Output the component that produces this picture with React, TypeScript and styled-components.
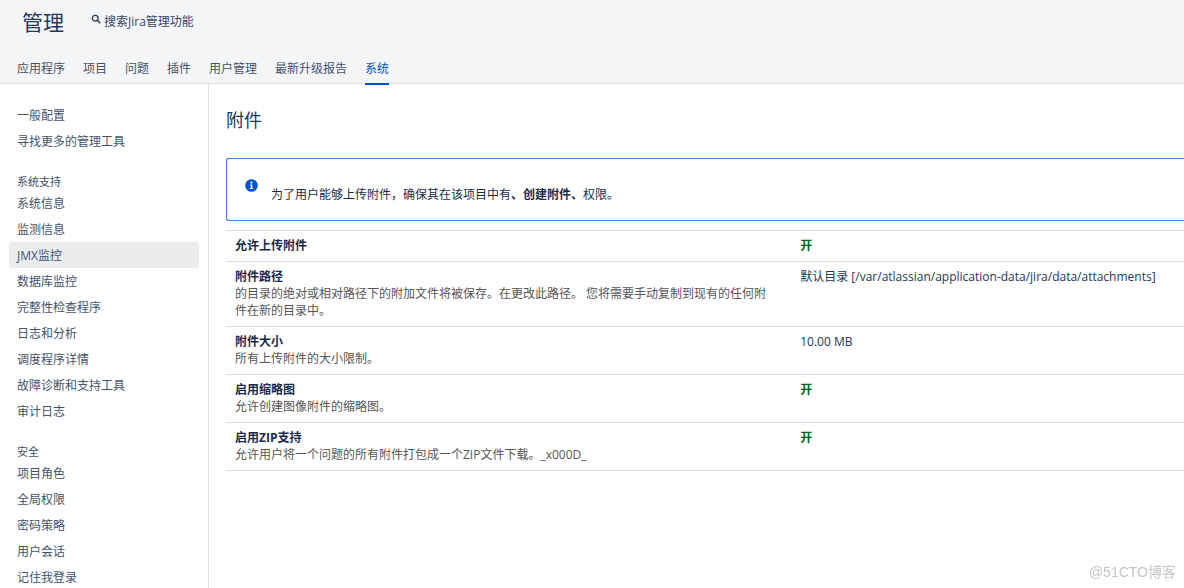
import React from "react";
import styled, { createGlobalStyle } from "styled-components";

const GlobalStyle = createGlobalStyle`
  *, *::before, *::after { box-sizing: border-box; }
  body {
    margin: 0;
    background: #fff;
    color: #253858;
    font-family: "Open Sans", "Noto Sans CJK SC", sans-serif;
    font-size: 12px;
    line-height: 17px;
  }
  a { color: inherit; text-decoration: none; }
  ul { list-style: none; margin: 0; padding: 0; }
`;

const Page = styled.div`
  display: flex;
  flex-direction: column;
  height: 100vh;
  overflow: hidden;
`;

const Header = styled.header`
  flex: none;
  background: #f4f5f7;
  border-bottom: 1px solid #dfe1e6;
`;

const TitleBar = styled.div`
  display: flex;
  align-items: center;
  gap: 27px;
  height: 53px;
  padding: 0 22px 9px;
`;

const PageTitle = styled.h1`
  margin: 0;
  font-size: 21px;
  line-height: 28px;
  font-weight: 400;
  color: #253858;
`;

const SearchButton = styled.button`
  display: flex;
  align-items: center;
  gap: 3px;
  padding: 0 0 2px;
  border: 0;
  background: none;
  color: #344563;
  font: inherit;
  cursor: pointer;

  svg {
    margin-bottom: 4px;
  }
`;

const Tabs = styled.ul`
  && {
    display: flex;
    gap: 18px;
    padding: 0 17px;
  }
`;

const Tab = styled.a<{ $active?: boolean }>`
  display: block;
  height: 32px;
  line-height: 32px;
  margin-bottom: -2px;
  color: ${(p) => (p.$active ? "#0052cc" : "#42526e")};
  border-bottom: 2px solid ${(p) => (p.$active ? "#0052cc" : "transparent")};
  position: relative;
`;

const Body = styled.div`
  display: flex;
  flex: 1;
  min-height: 0;
`;

const Sidebar = styled.nav`
  flex: 0 0 209px;
  display: flex;
  flex-direction: column;
  gap: 19px;
  padding: 18px 9px 0;
  border-right: 1px solid #dfe1e6;
  overflow: hidden;
`;

const GroupHeading = styled.h2`
  margin: 0;
  padding: 0 8px;
  font-size: 11px;
  line-height: 17px;
  font-weight: 400;
  color: #42526e;
`;

const SideLink = styled.a<{ $active?: boolean }>`
  display: block;
  padding: 2px 8px 0;
  line-height: 24px;
  border-radius: 3px;
  color: #42526e;
  background: ${(p) => (p.$active ? "#ebecee" : "transparent")};
`;

const Content = styled.main`
  flex: 1;
  min-width: 0;
  padding: 24px 0 0 17px;
`;

const SectionTitle = styled.h2`
  margin: 0 0 26px;
  font-size: 18px;
  line-height: 24px;
  font-weight: 400;
  color: #253858;
`;

const Message = styled.div`
  display: flex;
  align-items: flex-start;
  gap: 13px;
  padding: 20px 18px 17px;
  margin-bottom: 9px;
  border: 1px solid #3f7fdc;
  border-right: 0;
  border-radius: 3px 0 0 3px;
`;

const MessageText = styled.p`
  margin: 0;
  padding-top: 7px;
  color: #172b4d;
`;

const SettingsTable = styled.table`
  width: 100%;
  table-layout: fixed;
  border-collapse: separate;
  border-spacing: 0;
  border-top: 1px solid #dfe1e6;
`;

const LabelColumn = styled.col`
  width: 59%;
`;

const LabelCell = styled.th`
  padding: 6px 24px 7px 9px;
  border-bottom: 1px solid #dfe1e6;
  text-align: left;
  vertical-align: top;
  font-weight: 700;
  color: #172b4d;
`;

const Description = styled.div`
  font-weight: 400;
  color: #555;
`;

const ValueCell = styled.td`
  padding: 6px 9px 7px;
  border-bottom: 1px solid #dfe1e6;
  vertical-align: top;
  color: #253858;
`;

const Enabled = styled.strong`
  color: #006600;
`;

const Watermark = styled.div`
  position: fixed;
  right: 8px;
  bottom: 6px;
  font-family: "Liberation Sans", "Noto Sans CJK SC", sans-serif;
  font-size: 14px;
  line-height: 20px;
  color: #c4c4c4;
`;

const SearchIcon = () => (
  <svg width="10" height="10" viewBox="0 0 10 10" fill="none" stroke="#253858" strokeWidth="1.3" aria-hidden="true">
    <circle cx="4.2" cy="4.2" r="2.9" />
    <path d="M6.3 6.3 8.8 8.8" strokeLinecap="round" />
  </svg>
);

const InfoIcon = () => (
  <svg width="13" height="13" viewBox="0 0 13 13" aria-hidden="true">
    <circle cx="6.5" cy="6.5" r="6.3" fill="#0052cc" />
    <circle cx="6.5" cy="3.6" r="1.1" fill="#fff" />
    <path d="M5 5.4h2.3v3.5h.9v1.2H4.9V8.9h.9V6.6H5z" fill="#fff" />
  </svg>
);

const tabs = ["应用程序", "项目", "问题", "插件", "用户管理", "最新升级报告", "系统"];

const groups: { heading?: string; items: string[] }[] = [
  { items: ["一般配置", "寻找更多的管理工具"] },
  {
    heading: "系统支持",
    items: [
      "系统信息",
      "监测信息",
      "JMX监控",
      "数据库监控",
      "完整性检查程序",
      "日志和分析",
      "调度程序详情",
      "故障诊断和支持工具",
      "审计日志",
    ],
  },
  { heading: "安全", items: ["项目角色", "全局权限", "密码策略", "用户会话", "记住我登录"] },
];

const settings: { label: string; description?: string; value: React.ReactNode }[] = [
  { label: "允许上传附件", value: <Enabled>开</Enabled> },
  {
    label: "附件路径",
    description:
      "的目录的绝对或相对路径下的附加文件将被保存。在更改此路径。 您将需要手动复制到现有的任何附件在新的目录中。",
    value: "默认目录 [/var/atlassian/application-data/jira/data/attachments]",
  },
  { label: "附件大小", description: "所有上传附件的大小限制。", value: "10.00 MB" },
  { label: "启用缩略图", description: "允许创建图像附件的缩略图。", value: <Enabled>开</Enabled> },
  {
    label: "启用ZIP支持",
    description: "允许用户将一个问题的所有附件打包成一个ZIP文件下载。_x000D_",
    value: <Enabled>开</Enabled>,
  },
];

export default function App() {
  return (
    <Page lang="zh-CN">
      <GlobalStyle />
      <Header>
        <TitleBar>
          <PageTitle>管理</PageTitle>
          <SearchButton type="button">
            <SearchIcon />
            搜索Jira管理功能
          </SearchButton>
        </TitleBar>
        <nav aria-label="管理">
          <Tabs>
            {tabs.map((tab) => (
              <li key={tab}>
                <Tab href="#" $active={tab === "系统"}>
                  {tab}
                </Tab>
              </li>
            ))}
          </Tabs>
        </nav>
      </Header>
      <Body>
        <Sidebar aria-label="系统">
          {groups.map((group) => (
            <div key={group.items[0]}>
              {group.heading && <GroupHeading>{group.heading}</GroupHeading>}
              <ul>
                {group.items.map((item) => (
                  <li key={item}>
                    <SideLink href="#" $active={item === "JMX监控"}>
                      {item}
                    </SideLink>
                  </li>
                ))}
              </ul>
            </div>
          ))}
        </Sidebar>
        <Content>
          <SectionTitle>附件</SectionTitle>
          <Message>
            <InfoIcon />
            <MessageText>
              为了用户能够上传附件，确保其在该项目中有<strong>、创建附件、</strong>权限。
            </MessageText>
          </Message>
          <SettingsTable>
            <colgroup>
              <LabelColumn />
              <col />
            </colgroup>
            <tbody>
              {settings.map((row) => (
                <tr key={row.label}>
                  <LabelCell scope="row">
                    {row.label}
                    {row.description && <Description>{row.description}</Description>}
                  </LabelCell>
                  <ValueCell>{row.value}</ValueCell>
                </tr>
              ))}
            </tbody>
          </SettingsTable>
        </Content>
      </Body>
      <Watermark>@51CTO博客</Watermark>
    </Page>
  );
}
